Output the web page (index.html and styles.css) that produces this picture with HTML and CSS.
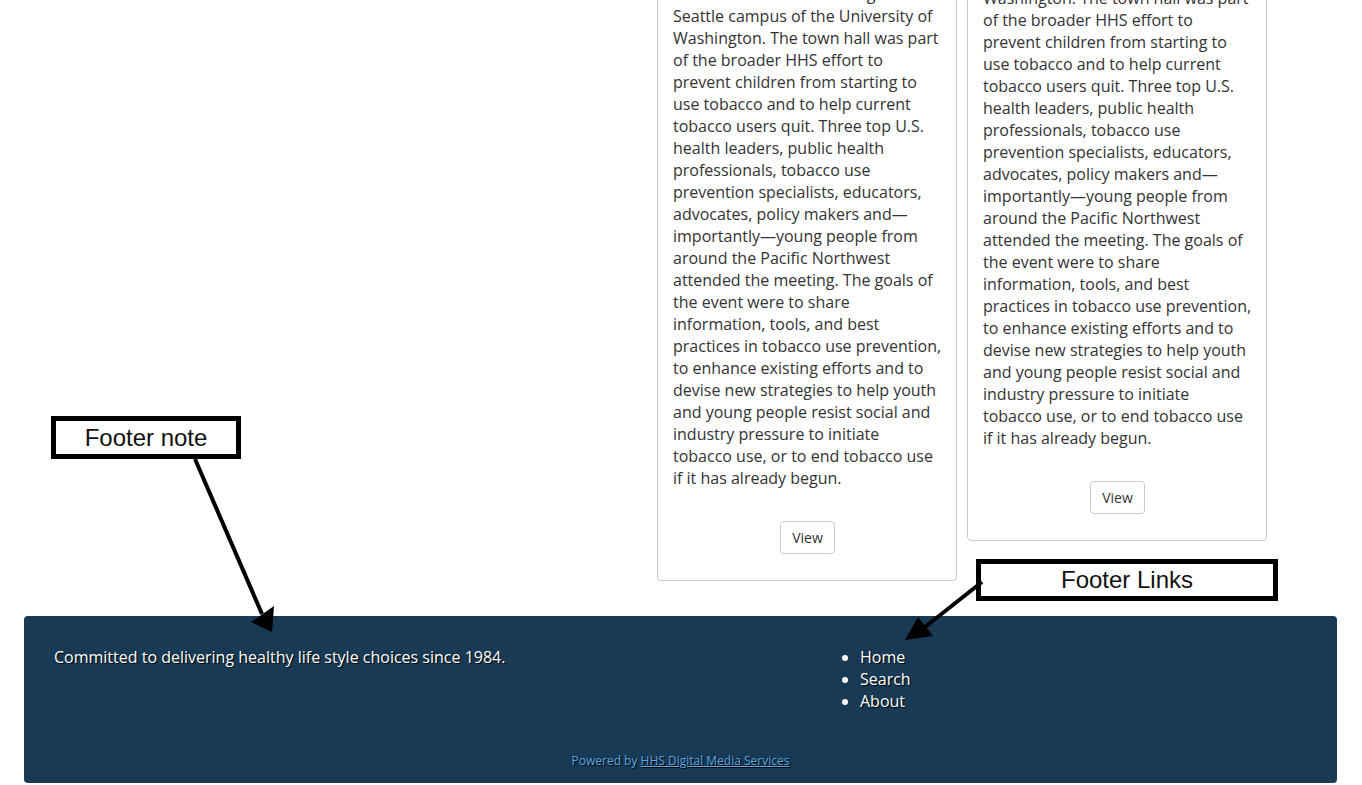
FILE: index.html
```html
<!DOCTYPE html>
<html lang="en">
<head>
<meta charset="utf-8">
<title>Healthy Choices</title>
<link rel="stylesheet" href="styles.css">
</head>
<body>
  <main class="main">
    <div class="main-aside"></div>
    <div class="cards">
      <article class="card">
        <h3 class="card-title">Youth Tobacco Prevention Town Hall Meeting</h3>
        <p class="card-text">In May 2011, the Department of Health and Human Services (HHS) hosted a town hall meeting at the Seattle campus of the University of Washington. The town hall was part of the broader HHS effort to prevent children from starting to use tobacco and to help current tobacco users quit. Three top U.S. health leaders, public health professionals, tobacco use prevention specialists, educators, advocates, policy makers and—importantly—young people from around the Pacific Northwest attended the meeting. The goals of the event were to share information, tools, and best practices in tobacco use prevention, to enhance existing efforts and to devise new strategies to help youth and young people resist social and industry pressure to initiate tobacco use, or to end tobacco use if it has already begun.</p>
        <div class="card-actions"><button class="btn" type="button">View</button></div>
      </article>
      <article class="card">
        <h3 class="card-title">Town Hall Recap</h3>
        <p class="card-text">In May 2011, the Department of Health and Human Services (HHS) hosted a town hall meeting at the Seattle campus of the University of Washington. The town hall was part of the broader HHS effort to prevent children from starting to use tobacco and to help current tobacco users quit. Three top U.S. health leaders, public health professionals, tobacco use prevention specialists, educators, advocates, policy makers and—importantly—young people from around the Pacific Northwest attended the meeting. The goals of the event were to share information, tools, and best practices in tobacco use prevention, to enhance existing efforts and to devise new strategies to help youth and young people resist social and industry pressure to initiate tobacco use, or to end tobacco use if it has already begun.</p>
        <div class="card-actions"><button class="btn" type="button">View</button></div>
      </article>
    </div>
  </main>

  <footer class="footer">
    <div class="footer-row">
      <p class="footer-note">Committed to delivering healthy life style choices since 1984.</p>
      <ul class="footer-links">
        <li><a href="#">Home</a></li>
        <li><a href="#">Search</a></li>
        <li><a href="#">About</a></li>
      </ul>
    </div>
    <p class="powered">Powered by <a href="#">HHS Digital Media Services</a></p>
  </footer>

  <div class="callout callout-note">Footer note</div>
  <div class="callout callout-links">Footer Links</div>
  <svg class="arrows" width="1362" height="785" viewBox="0 0 1362 785" aria-hidden="true">
    <line x1="195" y1="459" x2="262" y2="614" stroke="#000" stroke-width="4"/>
    <polygon points="272,632 251,622 274,606" fill="#000"/>
    <line x1="982" y1="582" x2="925" y2="627" stroke="#000" stroke-width="4"/>
    <polygon points="905,640 918,617 933,636" fill="#000"/>
  </svg>
</body>
</html>
```

FILE: styles.css
```css
html, body {
  margin: 0;
  padding: 0;
}

body {
  height: 100vh;
  overflow: hidden;
  display: flex;
  flex-direction: column;
  justify-content: flex-end;
  background: #fff;
  font-family: "Open Sans", "Noto Sans", sans-serif;
  font-size: 16px;
  line-height: 22px;
  color: #333;
}

.main {
  flex-shrink: 0;
  display: flex;
  margin: 0 25px 35px 24px;
}

.main-aside {
  flex: 0 0 633px;
}

.cards {
  display: flex;
  align-items: flex-start;
  gap: 10px;
}

.card {
  box-sizing: border-box;
  width: 300px;
  border: 1px solid #c8c8c8;
  border-radius: 4px;
  padding: 15px 14px 26px 15px;
}

.card-title {
  margin: 0 0 10px;
  font-size: 20px;
  line-height: 40px;
  font-weight: 600;
}

.card-text {
  margin: 0;
}

.card-actions {
  display: flex;
  justify-content: center;
  margin-top: 32px;
}

.btn {
  font-family: "Open Sans", "Noto Sans", sans-serif;
  font-size: 14px;
  line-height: 21px;
  color: #333;
  background: #fff;
  border: 1px solid #ccc;
  border-radius: 4px;
  padding: 5px 11px;
}

.footer {
  flex-shrink: 0;
  margin: 0 25px 2px 24px;
  padding: 30px 30px 13px;
  background: #183a54;
  border-radius: 4px;
  color: #fff;
  text-shadow: 1px 1px 1px #000;
}

.footer-row {
  display: grid;
  grid-template-columns: 766px 1fr;
}

.footer-note {
  margin: 0;
}

.footer-links {
  margin: 0;
  padding-left: 40px;
}

.footer-links a {
  color: #fff;
  text-decoration: none;
}

.powered {
  margin: 40px 0 0;
  text-align: center;
  font-size: 12px;
  line-height: 18px;
  color: #5fa8e2;
}

.powered a {
  color: #5fa8e2;
  text-decoration: underline;
}

.callout {
  position: absolute;
  box-sizing: border-box;
  display: flex;
  align-items: center;
  justify-content: center;
  background: #fff;
  border: 5px solid #000;
  font-family: "Liberation Sans", Arial, sans-serif;
  font-size: 24px;
  color: #111;
}

.callout-note {
  left: 51px;
  top: 416px;
  width: 190px;
  height: 43px;
}

.callout-links {
  left: 976px;
  top: 559px;
  width: 302px;
  height: 42px;
}

.arrows {
  position: absolute;
  left: 0;
  top: 0;
  pointer-events: none;
}
```
